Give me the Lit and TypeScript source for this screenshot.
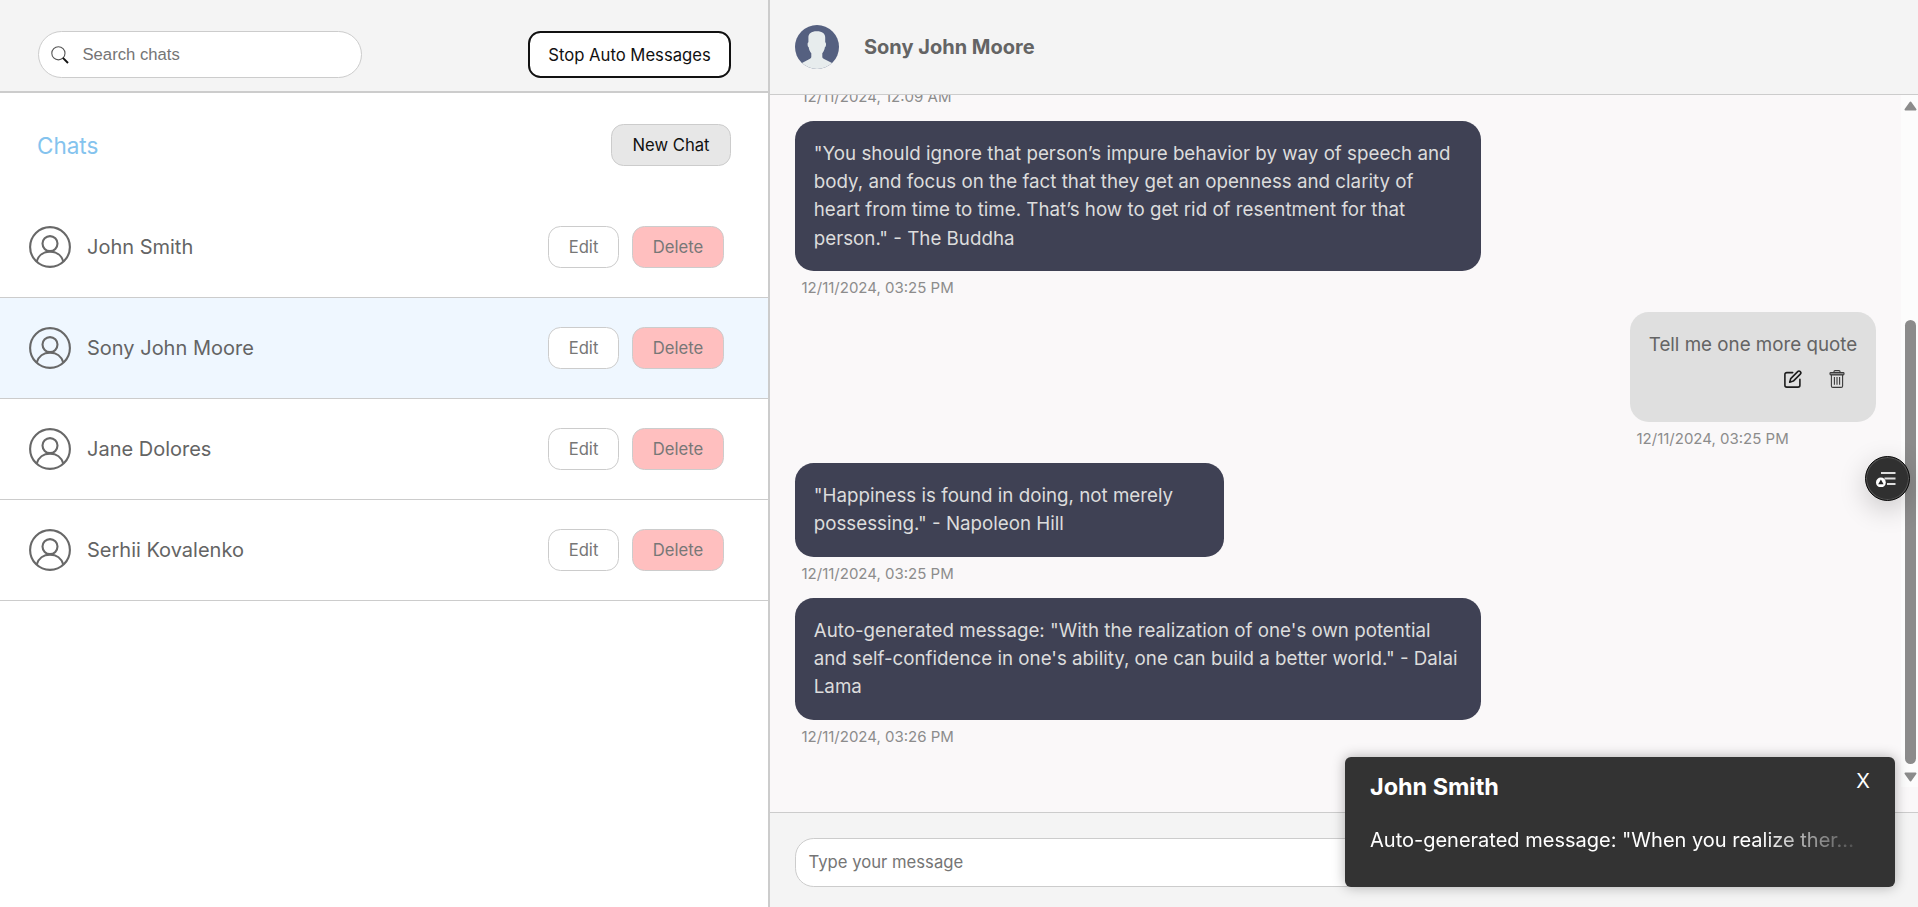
import { LitElement, html, css, svg, nothing } from "lit";
import { classMap } from "lit/directives/class-map.js";

interface Message {
  text: string;
  time: string;
  own?: boolean;
  size?: "wide" | "medium";
}

const CHATS = ["John Smith", "Sony John Moore", "Jane Dolores", "Serhii Kovalenko"];
const ACTIVE = "Sony John Moore";

const MESSAGES: Message[] = [
  {
    text: "\"You should ignore that person’s impure behavior by way of speech and body, and focus on the fact that they get an openness and clarity of heart from time to time. That’s how to get rid of resentment for that person.\" - The Buddha",
    time: "12/11/2024, 03:25 PM",
    size: "wide",
  },
  { text: "Tell me one more quote", time: "12/11/2024, 03:25 PM", own: true },
  {
    text: "\"Happiness is found in doing, not merely possessing.\" - Napoleon Hill",
    time: "12/11/2024, 03:25 PM",
    size: "medium",
  },
  {
    text: "Auto-generated message: \"With the realization of one's own potential and self-confidence in one's ability, one can build a better world.\" - Dalai Lama",
    time: "12/11/2024, 03:26 PM",
    size: "wide",
  },
];

const userIcon = svg`
  <svg class="user" viewBox="0 0 42 42" fill="none" stroke="#686868" stroke-width="2.100">
    <circle cx="21" cy="21" r="19.900"/>
    <circle cx="21" cy="17.600" r="7.500"/>
    <path d="M7.600 35.600C9.400 29.300 14.600 25.600 21 25.600s11.600 3.700 13.400 10"/>
  </svg>`;

const searchIcon = svg`
  <svg class="glass" viewBox="0 0 18 18" fill="none">
    <circle cx="7.400" cy="7.300" r="6.600" stroke="#555" stroke-width="1.100"/>
    <path d="M11.900 11.900L17 17" stroke="#111" stroke-width="1.900"/>
  </svg>`;

const editIcon = svg`
  <svg class="tool" viewBox="0 0 18 18" fill="none" stroke="#1c1c1c" stroke-width="1.600" stroke-linecap="round" stroke-linejoin="round">
    <path d="M8.700 2.600H2.800A1.900 1.900 0 0 0 .9 4.500V15.200A1.900 1.900 0 0 0 2.800 17.100H14A1.900 1.900 0 0 0 15.900 15.200V9.400"/>
    <path d="M13.700 1.600a1.800 1.800 0 0 1 2.600 2.500L9.300 11.100 5.700 12.200 6.700 8.600z"/>
  </svg>`;

const trashIcon = svg`
  <svg class="tool" viewBox="0 0 18 18" fill="none" stroke="#3a3a3a" stroke-width="1.100" stroke-linejoin="round">
    <path d="M6 2.500V1.600Q6 .6 7 .6H11Q12 .6 12 1.600V2.500"/>
    <rect x="2" y="2.500" width="14" height="2.400" rx=".8" fill="#888"/>
    <path d="M3.400 5V15.900Q3.400 17.400 4.900 17.400H13.100Q14.600 17.400 14.600 15.900V5"/>
    <path d="M6.400 7V14.800M9 7V14.800M11.600 7V14.800"/>
  </svg>`;

const avatar = svg`
  <svg class="avatar" viewBox="0 0 44 44">
    <defs><clipPath id="disc"><circle cx="22" cy="22" r="22"/></clipPath></defs>
    <g clip-path="url(#disc)">
      <rect width="44" height="44" fill="#556080"/>
      <path fill="#e7eced" d="M16.300 31.800V28.200C14.900 26.800 14 24.600 13.700 22.200 12.900 21.900 12.600 20.600 12.600 19.200 12.600 18.300 12.800 17.600 13.400 17.300V12.500C13.400 8.800 16.200 6.300 21.800 6.300S30.200 8.800 30.200 12.500V17.300C30.800 17.600 31 18.300 31 19.200 31 20.600 30.700 21.900 29.900 22.200 29.600 24.600 28.600 26.800 27.300 28.200V31.800C27.300 32.700 27.800 33.300 28.600 33.700L37.500 38.200V44H6.500V38.200L15 33.700C15.800 33.300 16.300 32.700 16.300 31.800Z"/>
    </g>
  </svg>`;

const floatIcon = svg`
  <svg class="float-icon" viewBox="0 0 20 16">
    <path d="M5 2H19.500M8.500 7.500H19.500M11 13H19.500" stroke="#dedede" stroke-width="1.800"/>
    <circle cx="4.900" cy="11.500" r="4.900" fill="#fff"/>
    <path d="M4.900 8.400L7.600 13.300H2.200Z" fill="#222"/>
  </svg>`;

class AppRoot extends LitElement {
  static styles = css`
    :host { display: block; height: 907px; overflow: hidden; font-family: Inter, "Liberation Sans", sans-serif; color: #646464; position: relative; background: #fff; }
    * { box-sizing: border-box; }
    svg { display: block; flex: none; }
    button { font: 400 16.667px Inter, sans-serif; margin: 0; padding: 0 17.500px; border: 1px solid #ccc; border-radius: 12.500px; height: 42px; display: inline-flex; align-items: center; justify-content: center; white-space: nowrap; }
    .page { display: flex; height: 100%; }

    .side { width: 770px; flex: none; border-right: 2px solid #ccc; display: flex; flex-direction: column; }
    .side-head { height: 93px; background: #f4f4f4; border-bottom: 2px solid #ccc; padding: 31px 37px 0 38px; display: flex; justify-content: space-between; align-items: flex-start; }
    .search { width: 324px; height: 47px; border: 1px solid #ccc; border-radius: 24px; background: #fff; display: flex; align-items: center; padding-left: 12px; gap: 13.500px; color: #757575; font: 16.667px "Liberation Sans", Arial, sans-serif; }
    .glass { width: 18px; height: 18px; }
    .stop { width: 203px; height: 47px; border: 2px solid #111; background: #fff; color: #111; border-radius: 12.500px; }
    .title { display: flex; justify-content: space-between; align-items: center; height: 104px; padding: 0 37px; }
    .title-text { font-size: 22.500px; color: #84c3ee; }
    .new { width: 120px; background: #e7e7e7; color: #111; }
    .row { height: 101px; border-bottom: 1px solid #ccc; padding: 0 44px 0 29px; display: flex; align-items: center; }
    .row.active { background: #eff7ff; }
    .user { width: 42px; height: 42px; }
    .name { font-size: 20px; margin-left: 16px; flex: 1; }
    .actions { display: flex; gap: 13px; }
    .edit { width: 71px; background: #fff; color: #777; }
    .delete { width: 92px; background: #ffbfbf; color: #777; }

    .main { flex: 1; display: flex; flex-direction: column; min-width: 0; background: #faf8f9; }
    .main-head { height: 95px; flex: none; background: #f4f4f4; border-bottom: 1px solid #ccc; display: flex; align-items: center; padding-left: 25px; gap: 25px; font-size: 20px; font-weight: 700; }
    .avatar { width: 44px; height: 44px; }
    .scroller { height: 717px; display: flex; }
    .thread { flex: 1; display: flex; flex-direction: column; overflow: hidden; justify-content: flex-end; padding: 0 25px 66px 25px; }
    .message { align-self: flex-start; display: flex; flex-direction: column; flex: none; margin-top: 15px; }
    .message.own { align-self: flex-end; }
    .bubble { border-radius: 18.750px; padding: 18.750px; font-size: 18.750px; line-height: 28.125px; background: #3f4154; color: #dcdcdc; }
    .wide .bubble { width: 686px; }
    .medium .bubble { width: 429px; }
    .own .bubble { width: 246px; height: 110px; background: #dfdfdf; color: #646464; white-space: nowrap; }
    .tools { display: flex; justify-content: flex-end; gap: 26px; padding: 11px 11px 0 0; }
    .tool { width: 18px; height: 18px; }
    .time { font-size: 15px; line-height: 18px; color: #8c8c8c; padding-left: 6.500px; margin-top: 8px; height: 18px; }

    .bar { width: 17px; height: 692px; background: #fcfcfc; display: flex; flex-direction: column; align-items: center; padding: 6px 0 5px 1px; }
    .arrow { width: 13px; height: 10px; }
    .thumb { width: 11px; height: 444px; margin-top: auto; margin-bottom: 8px; border-radius: 5.500px; background: #8b8b8b; }

    .compose { flex: 1; background: #f4f4f4; border-top: 1px solid #ccc; padding: 25px; }
    .field { height: 49px; border: 1px solid #ccc; border-radius: 18.750px; background: #fff; color: #757575; font-size: 16.667px; display: flex; align-items: center; padding: 0 12.500px 2px; }

    .float { position: absolute; right: 8px; top: 456px; width: 45px; height: 45px; border-radius: 50%; background: #303030; border: 1.500px solid #0a0a0a; box-shadow: 0 8px 28px rgba(0,0,0,.2), inset 0 0 0 1px #555; display: flex; align-items: center; justify-content: center; padding-right: 4px; }
    .float-icon { width: 20px; height: 16px; }
    .toast { position: absolute; right: 23px; bottom: 20px; width: 550px; height: 130px; border-radius: 6px; background: #333; color: #fff; box-shadow: 0 0 13px rgba(0,0,0,.3); padding: 15px 25px 0; }
    .toast-top { display: flex; justify-content: space-between; align-items: flex-start; }
    .toast-title { font-size: 23.400px; line-height: 30px; font-weight: 700; }
    .close { font-size: 20px; line-height: 20px; margin-top: -1px; }
    .toast-text { margin-top: 25px; font-size: 20px; line-height: 26px; white-space: nowrap; -webkit-mask-image: linear-gradient(90deg, #000 78%, transparent); mask-image: linear-gradient(90deg, #000 78%, transparent); }
  `;

  private renderMessage(m: Message) {
    return html`
      <div class=${classMap({ message: true, own: !!m.own, wide: m.size === "wide", medium: m.size === "medium" })}>
        <div class="bubble">${m.text}${m.own ? html`<div class="tools">${editIcon}${trashIcon}</div>` : nothing}</div>
        <div class="time">${m.time}</div>
      </div>`;
  }

  render() {
    return html`
      <div class="page">
        <div class="side">
          <div class="side-head">
            <div class="search">${searchIcon}<span>Search chats</span></div>
            <button class="stop">Stop Auto Messages</button>
          </div>
          <div class="title"><span class="title-text">Chats</span><button class="new">New Chat</button></div>
          ${CHATS.map((name) => html`
            <div class=${classMap({ row: true, active: name === ACTIVE })}>
              ${userIcon}<span class="name">${name}</span>
              <div class="actions"><button class="edit">Edit</button><button class="delete">Delete</button></div>
            </div>`)}
        </div>
        <div class="main">
          <div class="main-head">${avatar}<span>${ACTIVE}</span></div>
          <div class="scroller">
            <div class="thread">
              <div class="message"><div class="time">12/11/2024, 12:09 AM</div></div>
              ${MESSAGES.map((m) => this.renderMessage(m))}
            </div>
            <div class="bar">
              <svg class="arrow" viewBox="0 0 13 10"><path d="M6.500 1.500L11.500 8.500H1.500Z" fill="#8b8b8b" stroke="#8b8b8b" stroke-width="2" stroke-linejoin="round"/></svg>
              <div class="thumb"></div>
              <svg class="arrow" viewBox="0 0 13 10"><path d="M6.500 8.500L11.500 1.500H1.500Z" fill="#8b8b8b" stroke="#8b8b8b" stroke-width="2" stroke-linejoin="round"/></svg>
            </div>
          </div>
          <div class="compose"><div class="field">Type your message</div></div>
        </div>
      </div>
      <div class="float">${floatIcon}</div>
      <div class="toast">
        <div class="toast-top"><span class="toast-title">John Smith</span><span class="close">X</span></div>
        <div class="toast-text">Auto-generated message: "When you realize ther...</div>
      </div>`;
  }
}
customElements.define("app-root", AppRoot);
